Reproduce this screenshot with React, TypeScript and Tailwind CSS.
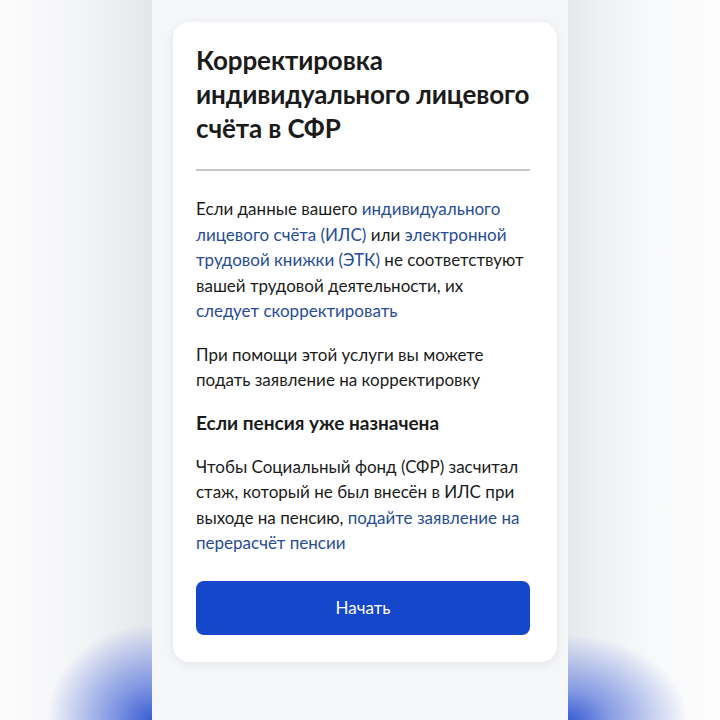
export default function App() {
  const link = "text-[#274c97]";
  return (
    <div className="flex h-[720px] w-[720px] overflow-hidden bg-white font-['Lato','Noto_Sans',sans-serif] text-[#1b1b1b]">
      {/* Left blurred side */}
      <div className="h-full w-[152px] shrink-0 bg-[image:radial-gradient(ellipse_105px_95px_at_100%_100%,#3a5ed4_0%,rgba(80,112,220,0.7)_35%,rgba(255,255,255,0)_100%),linear-gradient(to_right,#fcfcfd_0%,#f3f4f6_55%,#e4e6eb_100%)]" />

      {/* Phone column */}
      <div className="h-full w-[416px] shrink-0 bg-[#f5f6f8] pt-[22px]">
        <div className="ml-[21px] w-[384px] rounded-[16px] bg-white pb-[27px] pl-[23px] pr-[27px] pt-[21px] shadow-[0_2px_10px_rgba(20,30,60,0.08)]">
          <h1 className="text-[26px] font-bold leading-[34px] tracking-[-0.1px]">
            Корректировка индивидуального лицевого счёта в СФР
          </h1>
          <div className="mt-[24px] h-[2px] bg-[#c4c6ca]" />

          <p className="mt-[25px] text-[17px] leading-[25.5px]">
            Если данные вашего <span className={link}>индивидуального лицевого счёта (ИЛС)</span> или{" "}
            <span className={link}>электронной трудовой книжки (ЭТК)</span> не соответствуют вашей трудовой
            деятельности, их <span className={link}>следует скорректировать</span>
          </p>

          <p className="mt-[18px] text-[17px] leading-[25.5px]">
            При помощи этой услуги вы можете подать заявление на корректировку
          </p>

          <h2 className="mt-[17px] text-[19px] font-bold leading-[26px]">Если пенсия уже назначена</h2>

          <p className="mt-[18px] text-[17px] leading-[25.5px]">
            Чтобы Социальный фонд (СФР) засчитал стаж, который не был внесён в ИЛС при выходе на пенсию,{" "}
            <span className={link}>подайте заявление на перерасчёт пенсии</span>
          </p>

          <button className="mt-[25px] flex h-[54px] w-full items-center justify-center rounded-[8px] bg-[#1447c9] text-[17px] text-white">
            Начать
          </button>
        </div>
      </div>

      {/* Right blurred side */}
      <div className="h-full w-[152px] shrink-0 bg-[image:radial-gradient(ellipse_120px_85px_at_0%_100%,#3a5ed4_0%,rgba(80,112,220,0.65)_35%,rgba(255,255,255,0)_100%),linear-gradient(to_right,#e6e8ec_0%,#eef0f3_20%,#f8f9fa_55%,#fdfdfe_100%)]" />
    </div>
  );
}
